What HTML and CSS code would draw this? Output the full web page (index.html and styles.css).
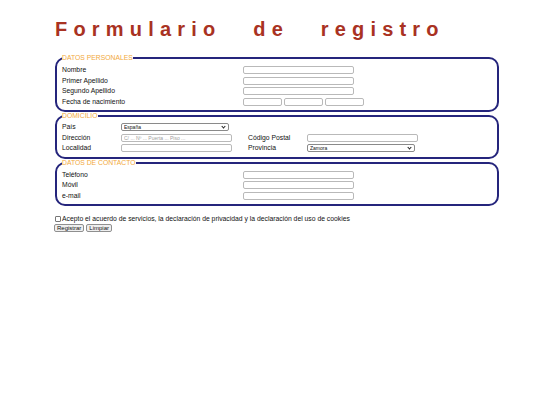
FILE: index.html
```html
<!DOCTYPE html>
<html lang="es">
<head>
<meta charset="utf-8">
<title>Formulario de registro</title>
<link rel="stylesheet" href="styles.css">
</head>
<body>
<div class="page">
  <h1 class="title">Formulario de registro</h1>
  <form class="form">
    <fieldset class="group">
      <legend class="group-title">DATOS PERSONALES</legend>
      <div class="grid grid-personal">
        <label class="label">Nombre</label><input type="text" class="field">
        <label class="label">Primer Apellido</label><input type="text" class="field">
        <label class="label">Segundo Apellido</label><input type="text" class="field">
        <label class="label">Fecha de nacimiento</label>
        <div class="dates"><input type="text" class="field date"><input type="text" class="field date"><input type="text" class="field date"></div>
      </div>
    </fieldset>
    <fieldset class="group group-address">
      <legend class="group-title">DOMICILIO</legend>
      <div class="grid grid-address">
        <label class="label">País</label>
        <span class="select-wrap"><select class="select"><option>España</option></select></span>
        <span></span><span></span>
        <label class="label">Dirección</label>
        <input type="text" class="field" placeholder="C/ ... Nº ... Puerta ... Piso ...">
        <label class="label">Código Postal</label>
        <input type="text" class="field">
        <label class="label">Localidad</label>
        <input type="text" class="field">
        <label class="label">Provincia</label>
        <span class="select-wrap"><select class="select"><option>Zamora</option></select></span>
      </div>
    </fieldset>
    <fieldset class="group">
      <legend class="group-title">DATOS DE CONTACTO</legend>
      <div class="grid grid-personal">
        <label class="label">Teléfono</label><input type="text" class="field">
        <label class="label">Móvil</label><input type="text" class="field">
        <label class="label">e-mail</label><input type="text" class="field">
      </div>
    </fieldset>
    <label class="consent"><input type="checkbox" class="check">Acepto el acuerdo de servicios, la declaración de privacidad y la declaración del uso de cookies</label>
    <div class="actions">
      <button type="button" class="btn">Registrar</button>
      <button type="button" class="btn">Limpiar</button>
    </div>
  </form>
</div>
</body>
</html>
```

FILE: styles.css
```css
html, body {
  margin: 0;
  padding: 0;
  background: #ffffff;
}

body {
  font-family: "Liberation Sans", Arial, sans-serif;
  font-size: 6.8px;
  color: #111111;
}

.page {
  padding: 0 0 0 55px;
  width: 444px;
}

.title {
  margin: 18px 0 0 0;
  font-size: 20px;
  line-height: 23px;
  font-weight: bold;
  letter-spacing: 6.2px;
  word-spacing: 20px;
  color: #a93222;
}

.form {
  margin-top: 13px;
}

.group {
  margin: 0;
  border: 2px solid #25257c;
  border-radius: 10px;
  padding: 3px 5px 3px 5px;
  min-width: 0;
}

.group-address {
  padding-top: 2px;
  padding-bottom: 3px;
}

.group-title {
  padding: 0;
  font-size: 6.8px;
  line-height: 8px;
  color: #f2a93b;
}

.grid {
  display: grid;
  grid-auto-rows: 10.5px;
  align-items: center;
}

.grid-personal {
  grid-template-columns: 181px 1fr;
}

.grid-address {
  grid-template-columns: 59px 127px 59px 1fr;
}

.label {
  line-height: 8px;
}

.field {
  box-sizing: border-box;
  width: 111px;
  height: 8px;
  margin: 0;
  padding: 0 2px;
  border: 1px solid #b9b9b9;
  border-radius: 2px;
  font-family: "Liberation Sans", Arial, sans-serif;
  font-size: 5px;
  background: #ffffff;
}

.field::placeholder {
  color: #a0a0a0;
}

.dates {
  display: flex;
  gap: 2px;
}

.date {
  width: 39px;
}

.select-wrap {
  position: relative;
  display: block;
  width: 108px;
  height: 8px;
}

.select-wrap::after {
  content: "";
  position: absolute;
  right: 4px;
  top: 1.5px;
  width: 2px;
  height: 2px;
  border-right: 1px solid #222222;
  border-bottom: 1px solid #222222;
  transform: rotate(45deg);
  pointer-events: none;
}

.select {
  -webkit-appearance: none;
  appearance: none;
  box-sizing: border-box;
  display: block;
  width: 108px;
  height: 8px;
  margin: 0;
  padding: 0 2px;
  border: 1px solid #8a8a8a;
  border-radius: 2px;
  font-family: "Liberation Sans", Arial, sans-serif;
  font-size: 5px;
  line-height: 6px;
  color: #111111;
  background: #ffffff;
}

.consent {
  display: flex;
  align-items: center;
  margin-top: 9px;
  line-height: 8px;
}

.check {
  -webkit-appearance: none;
  appearance: none;
  box-sizing: border-box;
  width: 6px;
  height: 6px;
  margin: 0 1px 0 0;
  border: 1px solid #777777;
  border-radius: 1px;
  background: #ffffff;
}

.actions {
  display: flex;
  gap: 2px;
  margin-top: 1px;
  margin-left: -1px;
}

.btn {
  margin: 0;
  padding: 0 2px;
  height: 8px;
  line-height: 6px;
  font-family: "Liberation Sans", Arial, sans-serif;
  font-size: 6px;
  color: #111111;
  background: #efefef;
  border: 1px solid #8f8f8f;
  border-radius: 2px;
}
```
